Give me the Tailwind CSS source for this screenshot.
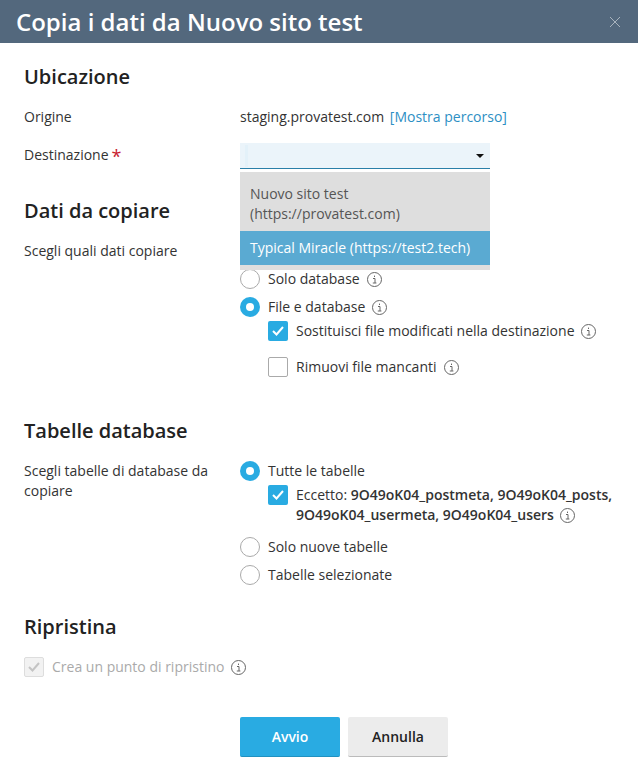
<!DOCTYPE html>
<html lang="it">

<head>
    <meta charset="UTF-8"/>
    <meta content="width=device-width, initial-scale=1.0" name="viewport"/>
    <script src="https://cdn.jsdelivr.net/npm/@tailwindcss/browser@4"></script>
    <title>Copia i dati</title>
</head>

<body class="w-[638px] h-[770px] overflow-hidden bg-white font-['Open_Sans',sans-serif] text-[14px] leading-[20px] text-[#333]">

<header class="h-[43px] bg-[#53687d] flex items-center justify-between pl-[16px] pr-[17px]">
    <h1 class="text-[24px] leading-[32px] font-semibold text-white">Copia i dati da Nuovo sito test</h1>
    <svg class="w-[12px] h-[12px] text-white/50" viewBox="0 0 12 12" fill="none" stroke="currentColor"><path d="M1 1l10 10M11 1L1 11"/></svg>
</header>

<main class="px-[24px]">
    <!-- Ubicazione -->
    <h2 class="mt-[21px] text-[20px] leading-[26px] font-semibold text-[#222]">Ubicazione</h2>
    <div class="mt-[17px] grid grid-cols-[216px_1fr]">
        <span>Origine</span>
        <span>staging.provatest.com <a class="ml-[2px] text-[#2d8fc4]">[Mostra percorso]</a></span>
    </div>
    <div class="mt-[18px] grid grid-cols-[216px_1fr] items-start">
        <span>Destinazione<span class="ml-[3px] text-[18px] leading-[20px] align-[-3px] text-[#c8202f]">*</span></span>
        <div class="relative w-[250px]">
            <div class="-mt-[2px] h-[26px] bg-[#ebf4fa] border-b border-[#2a7fa8] flex items-center justify-between pl-[5px] pr-[6px]">
                <span class="w-[3px] h-[22px] bg-[#e3f1f9]"></span>
                <svg class="w-[8px] h-[4px]" viewBox="0 0 8 4"><path d="M0 0h8L4 4z" fill="#111"/></svg>
            </div>
            <div class="absolute z-10 top-[27px] left-0 w-[250px] h-[98px] bg-[#dedede] text-[#555]">
                <div class="pt-[12px] px-[10px] h-[59px]">Nuovo sito test<br/>(https://provatest.com)</div>
                <div class="h-[34px] px-[10px] flex items-center bg-[#5aaad2] text-white">Typical Miracle (https://test2.tech)</div>
            </div>
        </div>
    </div>

    <!-- Dati da copiare -->
    <h2 class="mt-[29px] text-[20px] leading-[26px] font-semibold text-[#222]">Dati da copiare</h2>
    <div class="mt-[17px] grid grid-cols-[216px_1fr]">
        <span>Scegli quali dati copiare</span>
        <div class="flex flex-col">
            <div class="h-[20px]"></div>
            <div class="mt-[8px] flex items-center gap-[8px] h-[20px]">
                <span class="w-[20px] h-[20px] rounded-full border border-[#aaa] bg-white"></span>
                <span>Solo database</span>
                <svg class="-ml-[1px] w-[15px] h-[15px] text-[#666]" viewBox="0 0 15 15" fill="none" stroke="currentColor"><circle cx="7.5" cy="7.5" r="7"/><path d="M6 6.5h2v4.5M5.8 11h3.6M7.5 3.6v1.4"/></svg>
            </div>
            <div class="mt-[8px] flex items-center gap-[8px] h-[20px]">
                <span class="w-[20px] h-[20px] rounded-full bg-[#29abe2] flex items-center justify-center"><span class="w-[8px] h-[8px] rounded-full bg-white"></span></span>
                <span>File e database</span>
                <svg class="-ml-[1px] w-[15px] h-[15px] text-[#666]" viewBox="0 0 15 15" fill="none" stroke="currentColor"><circle cx="7.5" cy="7.5" r="7"/><path d="M6 6.5h2v4.5M5.8 11h3.6M7.5 3.6v1.4"/></svg>
            </div>
            <div class="mt-[4px] ml-[28px] flex items-center gap-[8px] h-[20px]">
                <span class="w-[20px] h-[20px] rounded-[2px] bg-[#29abe2] flex items-center justify-center">
                    <svg class="w-[12px] h-[10px]" viewBox="0 0 12 10" fill="none" stroke="#fff" stroke-width="2"><path d="M1 5l3.5 3.5L11 1"/></svg>
                </span>
                <span>Sostituisci file modificati nella destinazione</span>
                <svg class="-ml-[2px] w-[15px] h-[15px] text-[#666]" viewBox="0 0 15 15" fill="none" stroke="currentColor"><circle cx="7.5" cy="7.5" r="7"/><path d="M6 6.5h2v4.5M5.8 11h3.6M7.5 3.6v1.4"/></svg>
            </div>
            <div class="mt-[16px] ml-[28px] flex items-center gap-[8px] h-[20px]">
                <span class="w-[20px] h-[20px] rounded-[2px] border border-[#aaa]"></span>
                <span>Rimuovi file mancanti</span>
                <svg class="-ml-[1px] w-[15px] h-[15px] text-[#666]" viewBox="0 0 15 15" fill="none" stroke="currentColor"><circle cx="7.5" cy="7.5" r="7"/><path d="M6 6.5h2v4.5M5.8 11h3.6M7.5 3.6v1.4"/></svg>
            </div>
        </div>
    </div>

    <!-- Tabelle database -->
    <h2 class="mt-[41px] text-[20px] leading-[26px] font-semibold text-[#222]">Tabelle database</h2>
    <div class="mt-[17px] grid grid-cols-[216px_1fr]">
        <span class="w-[200px]">Scegli tabelle di database da copiare</span>
        <div class="flex flex-col">
            <div class="flex items-center gap-[8px] h-[20px]">
                <span class="w-[20px] h-[20px] rounded-full bg-[#29abe2] flex items-center justify-center"><span class="w-[8px] h-[8px] rounded-full bg-white"></span></span>
                <span>Tutte le tabelle</span>
            </div>
            <div class="mt-[4px] ml-[28px] flex items-start gap-[8px]">
                <span class="w-[20px] h-[20px] shrink-0 rounded-[2px] bg-[#29abe2] flex items-center justify-center">
                    <svg class="w-[12px] h-[10px]" viewBox="0 0 12 10" fill="none" stroke="#fff" stroke-width="2"><path d="M1 5l3.5 3.5L11 1"/></svg>
                </span>
                <div class="whitespace-nowrap">
                    <div>Eccetto: <b class="font-semibold">9O49oK04_postmeta, 9O49oK04_posts,</b></div>
                    <div class="flex items-center gap-[6px]"><b class="font-semibold">9O49oK04_usermeta, 9O49oK04_users</b>
                        <svg class="w-[15px] h-[15px] text-[#666]" viewBox="0 0 15 15" fill="none" stroke="currentColor"><circle cx="7.5" cy="7.5" r="7"/><path d="M6 6.5h2v4.5M5.8 11h3.6M7.5 3.6v1.4"/></svg>
                    </div>
                </div>
            </div>
            <div class="mt-[12px] flex items-center gap-[8px] h-[20px]">
                <span class="w-[20px] h-[20px] rounded-full border border-[#aaa]"></span>
                <span>Solo nuove tabelle</span>
            </div>
            <div class="mt-[8px] flex items-center gap-[8px] h-[20px]">
                <span class="w-[20px] h-[20px] rounded-full border border-[#aaa]"></span>
                <span>Tabelle selezionate</span>
            </div>
        </div>
    </div>

    <!-- Ripristina -->
    <h2 class="mt-[29px] text-[20px] leading-[26px] font-semibold text-[#222]">Ripristina</h2>
    <div class="mt-[17px] flex items-center gap-[8px] h-[20px]">
        <span class="w-[20px] h-[20px] rounded-[2px] border border-[#ddd] bg-[#f2f2f2] flex items-center justify-center">
            <svg class="w-[12px] h-[10px]" viewBox="0 0 12 10" fill="none" stroke="#c4c4c4" stroke-width="2"><path d="M1 5l3.5 3.5L11 1"/></svg>
        </span>
        <span class="text-[#aaa]">Crea un punto di ripristino</span>
        <svg class="-ml-[1px] w-[15px] h-[15px] text-[#666]" viewBox="0 0 15 15" fill="none" stroke="currentColor"><circle cx="7.5" cy="7.5" r="7"/><path d="M6 6.5h2v4.5M5.8 11h3.6M7.5 3.6v1.4"/></svg>
    </div>

    <footer class="mt-[40px] ml-[216px] flex gap-[8px]">
        <button class="w-[100px] h-[40px] rounded-[2px] bg-[#29abe2] border-b border-[#2191c0] text-white font-semibold">Avvio</button>
        <button class="w-[100px] h-[40px] rounded-[2px] bg-[#ececec] border-b border-[#bbb] text-[#222] font-semibold">Annulla</button>
    </footer>
</main>

</body>

</html>
